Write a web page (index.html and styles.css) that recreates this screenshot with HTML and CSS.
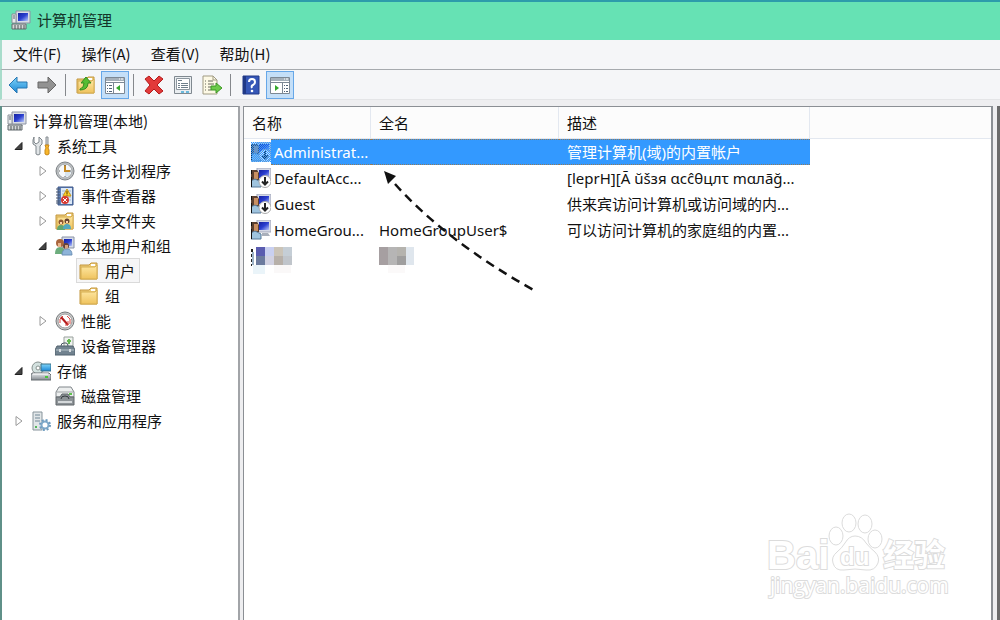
FILE: index.html
```html
<!DOCTYPE html>
<html lang="zh-CN">
<head>
  <meta charset="UTF-8">
  <meta name="viewport" content="width=device-width, initial-scale=1.0">
  <title>计算机管理</title>
  <link rel="stylesheet" href="styles.css">
</head>
<body>
  <!-- icon sprites -->
  <svg class="sprites" aria-hidden="true">
    <defs>
      <linearGradient id="screen" x1="0" y1="0" x2="1" y2="1">
        <stop offset="0" stop-color="#1420a0"/><stop offset=".5" stop-color="#2b3fd0"/><stop offset="1" stop-color="#b9c8fa"/>
      </linearGradient>
      <linearGradient id="gold" x1="0" y1="0" x2="0" y2="1">
        <stop offset="0" stop-color="#ffe9a6"/><stop offset="1" stop-color="#efc35e"/>
      </linearGradient>
      <linearGradient id="steel" x1="0" y1="0" x2="0" y2="1">
        <stop offset="0" stop-color="#e9ecee"/><stop offset="1" stop-color="#858b91"/>
      </linearGradient>
      <linearGradient id="sky" x1="0" y1="0" x2="0" y2="1">
        <stop offset="0" stop-color="#7fd4f8"/><stop offset="1" stop-color="#1b87d6"/>
      </linearGradient>
      <pattern id="dots" width="2" height="2" patternUnits="userSpaceOnUse">
        <path d="M0 0h1v1H0zM1 1h1v1H1z" fill="#3399ff"/>
      </pattern>
      <symbol id="computer" viewBox="0 0 20 20">
        <path d="M5 1h14v12H5z" fill="#d9dde6" stroke="#8b92a3"/>
        <path d="M7 3h10v8H7z" fill="url(#screen)"/>
        <path d="M1 4h4v9H1z" fill="#e8eaec" stroke="#8b9199"/>
        <path d="M2 6h2M2 8h2" stroke="#5e6771"/>
        <path d="M9 13h6l1 2H8z" fill="#b5bac4"/>
        <path d="M1 14h14v5H1z" fill="#d5d8d8" stroke="#60686c"/>
        <path d="M3 16h2M6 16h2M9 16h2M12 16h2M3 18h2M6 18h2M9 18h2M12 18h2" stroke="#4d5557"/>
      </symbol>
      <symbol id="tools" viewBox="0 0 20 20">
        <path d="M3 1v5l2 2 3-2V1l3 3v4L9 10v8q-2 2-4 0v-8L2 8V4z" fill="#e1e5e7" stroke="#7f868b"/>
        <path d="M15 1h2v8h-2z" fill="#d6dade" stroke="#878d92"/>
        <path d="M14 9h4l-1 3 1 2v4q-2 2-4 0v-4l1-2z" fill="#f8b62b" stroke="#c8891a"/>
      </symbol>
      <symbol id="clock" viewBox="0 0 20 20">
        <circle cx="10" cy="10" r="9" fill="#bec1c3" stroke="#7d8286"/>
        <circle cx="10" cy="10" r="7" fill="#f6f8fa" stroke="#a2a7aa"/>
        <path d="M10 10h6a6 6 0 0 1-6 6z" fill="#d7e4ee"/>
        <path d="M10 4v6h5" fill="none" stroke="#c48a27" stroke-width="2"/>
        <path d="M10 4v1M4 10h1M15 10h1M10 15v1" stroke="#666"/>
      </symbol>
      <symbol id="events" viewBox="0 0 20 20">
        <path d="M3 1h15v18H3z" fill="#5e80b6" stroke="#3c5789"/>
        <path d="M6 2h11v16H6z" fill="#dce8f6"/>
        <path d="M7 5h9M7 8h9M7 11h9M7 14h9" stroke="#9db5d4"/>
        <path d="M1 3h4M1 6h4M1 9h4M1 12h4M1 15h4M1 17h4" stroke="#4a5970"/>
        <path d="M12 3l4 7H8z" fill="#ffd22e" stroke="#c79618"/>
        <path d="M12 5v3M12 8.500v1" stroke="#553c00"/>
        <circle cx="10" cy="14" r="4" fill="#d73931"/>
        <path d="M8 12l4 4M12 12l-4 4" stroke="#fff"/>
      </symbol>
      <symbol id="folder" viewBox="0 0 20 20">
        <path d="M1 4h9l2-2h6v16H1z" fill="#eccb78" stroke="#c3963d"/>
        <path d="M12 3h4v2h-4z" fill="#fff"/>
        <path d="M2 6h14l2-2v14H2z" fill="url(#gold)" stroke="#d5ad51"/>
      </symbol>
      <symbol id="shared" viewBox="0 0 20 20">
        <use href="#folder"/>
        <circle cx="6" cy="11" r="2.500" fill="#8c5632"/>
        <path d="M2 19q0-5 4-5t4 5z" fill="#62a66d"/>
        <circle cx="12" cy="10" r="2.500" fill="#694431"/>
        <path d="M8 18q0-5 4-5t4 5z" fill="#53a8be"/>
        <path d="M5 12h2M11 11h2" stroke="#ffd6ae" stroke-width="2"/>
      </symbol>
      <symbol id="users" viewBox="0 0 20 20">
        <path d="M7 1h12v11H7z" fill="#d6dce8" stroke="#8992a5"/>
        <path d="M9 3h8v7H9z" fill="url(#screen)"/>
        <circle cx="5" cy="7" r="4" fill="#a9653d"/>
        <path d="M3 7h3v4H3z" fill="#e8b48c"/>
        <path d="M0 18q0-7 5-7t5 7z" fill="#6dad7d"/>
        <circle cx="11" cy="10" r="3" fill="#654239"/>
        <path d="M10 9h3v4h-3z" fill="#d8a27e"/>
        <path d="M7 19q0-6 5-6t5 6z" fill="#8eb4d9" stroke="#6d91b7"/>
      </symbol>
      <symbol id="gauge" viewBox="0 0 20 20">
        <circle cx="10" cy="10" r="9" fill="#ccc" stroke="#74787a"/>
        <circle cx="10" cy="10" r="7" fill="#fff" stroke="#999"/>
        <path d="M5 12V8l3-3M15 13V8l-3-3" fill="none" stroke="#d9453f"/>
        <path d="M6 6l7 8" stroke="#b51c1c" stroke-width="2"/>
        <path d="M13 10v4h-3" fill="none" stroke="#d9453f"/>
      </symbol>
      <symbol id="devices" viewBox="0 0 20 20">
        <path d="M9 1h9v10H9z" fill="#eef2ee" stroke="#99a09d"/>
        <path d="M14 3v5M12 5h4" stroke="#63b852" stroke-width="2"/>
        <path d="M6 10q0-3 3-3h2q2 0 2 3" fill="none" stroke="#485661"/>
        <path d="M2 10h16l2 4v5H0v-5z" fill="#71828f" stroke="#53626e"/>
        <path d="M1 14h18" stroke="#bac5cc"/>
        <path d="M4 13h2v3H4zM14 13h2v3h-2z" fill="#d7dce0"/>
      </symbol>
      <symbol id="storage" viewBox="0 0 20 20">
        <circle cx="7" cy="7" r="6" fill="#d3e1df" stroke="#87918f"/>
        <circle cx="7" cy="7" r="2" fill="#fff" stroke="#87918f"/>
        <path d="M10 3h10v7H10z" fill="url(#sky)" stroke="#387089"/>
        <path d="M1 12h17l2 2v5H0v-5z" fill="url(#steel)" stroke="#666d70"/>
        <path d="M2 13h15" stroke="#fff"/>
        <path d="M14 15h3v2h-3z" fill="#48c33a"/>
      </symbol>
      <symbol id="disk" viewBox="0 0 20 20">
        <path d="M4 1h12l3 5v5H1V6z" fill="#eceeee" stroke="#80868a"/>
        <path d="M2 6h16" stroke="#9da2a4"/>
        <path d="M14 7h3v2h-3z" fill="#5fc24e"/>
        <path d="M1 11h4l2-3h6l2 3h4v8H1z" fill="#8c9296" stroke="#60666a"/>
        <path d="M3 15h14v2H3z" fill="#d4d8da"/>
        <path d="M6 13q0-3 4-3t4 3" fill="none" stroke="#33393d"/>
      </symbol>
      <symbol id="services" viewBox="0 0 20 20">
        <path d="M2 1h9v18H2z" fill="#e1e6e8" stroke="#87949b"/>
        <path d="M4 4h5M4 7h5M4 10h5" stroke="#718796"/>
        <path d="M4 15h2v2H4z" fill="#54b75a"/>
        <circle cx="14" cy="14" r="3.500" fill="#fff" stroke="#7fa9c9" stroke-width="2"/>
        <circle cx="14" cy="14" r="5" fill="none" stroke="#6e9cbf" stroke-width="2" stroke-dasharray="2 1.930"/>
      </symbol>
      <symbol id="user" viewBox="0 0 20 20">
        <path d="M6 0h14v12H6z" fill="#d4d8e6" stroke="#a4a9bb"/>
        <path d="M8 2h10v8H8z" fill="url(#screen)"/>
        <path d="M11 13h6l2 3h-8z" fill="#aab0bb"/>
        <path d="M0 2h6l2 3v7H0z" fill="#5b4030"/>
        <path d="M3 4h4v7H3z" fill="#c98f62"/>
        <path d="M0 19v-6l4-2 6 3v5z" fill="#9fc4df" stroke="#587b99"/>
        <path d="M0 2h1v4H0zM0 9h1v10H0z" fill="#111"/>
      </symbol>
      <symbol id="user-off" viewBox="0 0 20 20">
        <use href="#user"/>
        <circle cx="14" cy="13.500" r="6" fill="#fff" stroke="#aaa"/>
        <path d="M14 9v7M11 13.500l3 3 3-3" fill="none" stroke="#222" stroke-width="2"/>
      </symbol>
      <symbol id="user-picked" viewBox="0 0 20 20">
        <use href="#user-off"/>
        <path d="M0 0h20v20H0z" fill="#3399ff" opacity=".3"/>
        <path d="M0 0h20v20H0z" fill="url(#dots)"/>
      </symbol>
      <symbol id="closed" viewBox="0 0 10 10"><path d="M2 0.500v9l6-4.500z" fill="#fff" stroke="#999"/></symbol>
      <symbol id="open" viewBox="0 0 10 10"><path d="M8 1.500v7H1z" fill="#444" stroke="#222"/></symbol>
      <symbol id="back" viewBox="0 0 20 20"><path d="M1 10l8-8v5h10v6H9v5z" fill="url(#sky)" stroke="#2776b1"/></symbol>
      <symbol id="forward" viewBox="0 0 20 20"><path d="M19 10l-8-8v5H1v6h10v5z" fill="#929292" stroke="#676767"/></symbol>
      <symbol id="up" viewBox="0 0 20 20">
        <use href="#folder"/>
        <path d="M4 14q4-1 4-6H5l5-6 5 6h-3q0 7-8 7z" fill="#56bd33" stroke="#358b1d"/>
      </symbol>
      <symbol id="pane" viewBox="0 0 20 20">
        <path d="M0.500 2.500h19v16H.5z" fill="#fff" stroke="#7c8894"/>
        <path d="M1 3h18v3H1z" fill="#a6b1bb"/>
        <path d="M14 4h1M16 4h2" stroke="#fff"/>
        <path d="M1 7.500h18M8.500 8v10" stroke="#7c8894"/>
        <path d="M2 10.500h1M4 10.500h3M2 13.500h1M4 13.500h3M2 16.500h1M4 16.500h3" stroke="#526579"/>
        <path d="M15 10v6l-4-3z" fill="#35a82c"/>
      </symbol>
      <symbol id="pane-right" viewBox="0 0 20 20">
        <path d="M0.500 2.500h19v16H.5z" fill="#fff" stroke="#7c8894"/>
        <path d="M1 3h18v3H1z" fill="#a6b1bb"/>
        <path d="M14 4h1M16 4h2" stroke="#fff"/>
        <path d="M1 7.500h18M12.500 8v10" stroke="#7c8894"/>
        <path d="M14 10.500h1M16 10.500h2M14 13.500h1M16 13.500h2M14 16.500h1M16 16.500h2" stroke="#526579"/>
        <path d="M5 10v6l4-3z" fill="#35a82c"/>
      </symbol>
      <symbol id="delete" viewBox="0 0 20 20">
        <path d="M1 4l4-3 5 5 5-5 4 3-6 6 6 6-4 3-5-5-5 5-4-3 5-6z" fill="#e23a3a" stroke="#b41b1b"/>
      </symbol>
      <symbol id="props" viewBox="0 0 20 20">
        <path d="M1.500 1.500h17v17h-17z" fill="#e9edf0" stroke="#808990"/>
        <path d="M3.500 3.500h13v11h-13z" fill="#fff" stroke="#8d979f"/>
        <path d="M5 5.500h4M5 8.500h2M8 8.500h7M5 10.500h2M8 10.500h7M5 12.500h2M8 12.500h7" stroke="#6f808c"/>
        <path d="M8 17h3M13 17h3" stroke="#6bb9dc" stroke-width="2"/>
      </symbol>
      <symbol id="export" viewBox="0 0 20 20">
        <path d="M1 1h10l4 4v14H1z" fill="#fdf9e5" stroke="#a09b83"/>
        <path d="M11 1v4h4" fill="none" stroke="#a09b83"/>
        <path d="M3 6h1M6 6h5M3 9h1M6 9h6M3 12h1M6 12h3M3 15h1M6 15h3" stroke="#68685d"/>
        <path d="M9 11h5V8l6 5-6 5v-3H9z" fill="#6cca49" stroke="#3d9826"/>
      </symbol>
      <symbol id="help" viewBox="0 0 20 20">
        <path d="M2 1h16v18H2z" fill="#3557b7" stroke="#233b88"/>
        <path d="M2 1h3v18H2z" fill="#203987"/>
        <path d="M8 7q0-3 3-3t3 3q0 2-2 3t-1 3" fill="none" stroke="#fff" stroke-width="2"/>
        <circle cx="11" cy="16" r="1.300" fill="#fff"/>
      </symbol>
    </defs>
  </svg>

  <div class="window">
    <header class="titlebar">
      <svg class="icon"><use href="#computer"/></svg>
      <h1>计算机管理</h1>
    </header>

    <nav class="menubar">
      <button>文件(F)</button>
      <button>操作(A)</button>
      <button>查看(V)</button>
      <button>帮助(H)</button>
    </nav>

    <div class="toolbar">
      <button aria-label="后退"><svg class="icon"><use href="#back"/></svg></button>
      <button aria-label="前进"><svg class="icon"><use href="#forward"/></svg></button>
      <span class="sep"></span>
      <button aria-label="向上"><svg class="icon"><use href="#up"/></svg></button>
      <button class="on" aria-label="控制台树"><svg class="icon"><use href="#pane"/></svg></button>
      <span class="sep"></span>
      <button aria-label="删除"><svg class="icon"><use href="#delete"/></svg></button>
      <button aria-label="属性"><svg class="icon"><use href="#props"/></svg></button>
      <button aria-label="导出列表"><svg class="icon"><use href="#export"/></svg></button>
      <span class="sep"></span>
      <button aria-label="帮助"><svg class="icon"><use href="#help"/></svg></button>
      <button class="on" aria-label="操作窗格"><svg class="icon"><use href="#pane-right"/></svg></button>
    </div>

    <main class="workspace">
      <nav class="tree">
        <ul>
          <li>
            <div class="node"><a href="#"><svg class="icon"><use href="#computer"/></svg>计算机管理(本地)</a></div>
            <ul class="top">
              <li>
                <div class="node"><button class="toggle" aria-label="折叠"><svg><use href="#open"/></svg></button><a href="#"><svg class="icon"><use href="#tools"/></svg>系统工具</a></div>
                <ul>
                  <li><div class="node"><button class="toggle" aria-label="展开"><svg><use href="#closed"/></svg></button><a href="#"><svg class="icon"><use href="#clock"/></svg>任务计划程序</a></div></li>
                  <li><div class="node"><button class="toggle" aria-label="展开"><svg><use href="#closed"/></svg></button><a href="#"><svg class="icon"><use href="#events"/></svg>事件查看器</a></div></li>
                  <li><div class="node"><button class="toggle" aria-label="展开"><svg><use href="#closed"/></svg></button><a href="#"><svg class="icon"><use href="#shared"/></svg>共享文件夹</a></div></li>
                  <li>
                    <div class="node"><button class="toggle" aria-label="折叠"><svg><use href="#open"/></svg></button><a href="#"><svg class="icon"><use href="#users"/></svg>本地用户和组</a></div>
                    <ul>
                      <li><div class="node leaf"><a href="#" class="current"><svg class="icon"><use href="#folder"/></svg>用户</a></div></li>
                      <li><div class="node leaf"><a href="#"><svg class="icon"><use href="#folder"/></svg>组</a></div></li>
                    </ul>
                  </li>
                  <li><div class="node"><button class="toggle" aria-label="展开"><svg><use href="#closed"/></svg></button><a href="#"><svg class="icon"><use href="#gauge"/></svg>性能</a></div></li>
                  <li><div class="node leaf"><a href="#"><svg class="icon"><use href="#devices"/></svg>设备管理器</a></div></li>
                </ul>
              </li>
              <li>
                <div class="node"><button class="toggle" aria-label="折叠"><svg><use href="#open"/></svg></button><a href="#"><svg class="icon"><use href="#storage"/></svg>存储</a></div>
                <ul>
                  <li><div class="node leaf"><a href="#"><svg class="icon"><use href="#disk"/></svg>磁盘管理</a></div></li>
                </ul>
              </li>
              <li><div class="node"><button class="toggle" aria-label="展开"><svg><use href="#closed"/></svg></button><a href="#"><svg class="icon"><use href="#services"/></svg>服务和应用程序</a></div></li>
            </ul>
          </li>
        </ul>
      </nav>

      <section class="list">
        <table>
          <colgroup>
            <col class="col-name"><col class="col-full"><col class="col-desc"><col>
          </colgroup>
          <thead>
            <tr><th>名称</th><th>全名</th><th>描述</th><th></th></tr>
          </thead>
          <tbody>
            <tr class="selected">
              <td class="name"><div><svg class="icon"><use href="#user-picked"/></svg><span>Administrat...</span></div></td>
              <td></td><td>管理计算机(域)的内置帐户</td><td></td>
            </tr>
            <tr>
              <td class="name"><div><svg class="icon"><use href="#user-off"/></svg><span>DefaultAcc...</span></div></td>
              <td></td><td>[leprH][Ā ŭšзя αcĉθцлτ mαлãğ...</td><td></td>
            </tr>
            <tr>
              <td class="name"><div><svg class="icon"><use href="#user-off"/></svg><span>Guest</span></div></td>
              <td></td><td>供来宾访问计算机或访问域的内...</td><td></td>
            </tr>
            <tr>
              <td class="name"><div><svg class="icon"><use href="#user"/></svg><span>HomeGrou...</span></div></td>
              <td>HomeGroupUser$</td><td>可以访问计算机的家庭组的内置...</td><td></td>
            </tr>
            <tr>
              <td class="name">
                <svg class="mosaic" viewBox="0 0 41 27">
                  <path d="M0 2h2v3H0zM0 7h1v3H0zM0 12h2v3H0zM0 17h1v2H0z" fill="#222"/>
                  <path d="M1 5h2v13H1z" fill="#9db4c8"/>
                  <path d="M2 18h12v9H2z" fill="#eaf4f9"/>
                  <path d="M23 18h17v8H23z" fill="#faf8f8"/>
                  <path d="M5 0h9v9H5z" fill="#5a5cb0"/><path d="M5 9h9v9H5z" fill="#6c7b9e"/>
                  <path d="M14 0h9v9h-9z" fill="#c9d0f1"/><path d="M14 9h9v9h-9z" fill="#d2d2e2"/>
                  <path d="M23 0h9v9h-9z" fill="#cbc4b8"/><path d="M23 9h9v9h-9z" fill="#b7b0a9"/>
                  <path d="M32 0h9v9h-9z" fill="#c5ced6"/><path d="M32 9h9v9h-9z" fill="#c0c5cb"/>
                </svg>
              </td>
              <td>
                <svg class="mosaic" viewBox="0 0 41 27">
                  <path d="M0 0h9v18H0z" fill="#a69fa1"/><path d="M9 0h9v18H9z" fill="#b6b5b5"/>
                  <path d="M18 0h9v9h-9z" fill="#b5b3ae"/><path d="M18 9h9v9h-9z" fill="#9f9e9e"/>
                  <path d="M27 0h8v18h-8z" fill="#dfe6ed"/><path d="M9 18h17v8H9z" fill="#fbf9f9"/>
                </svg>
              </td>
              <td></td><td></td>
            </tr>
          </tbody>
        </table>

        <svg class="arrow" viewBox="0 0 160 130" aria-hidden="true">
          <path d="M14 16Q66 74 156 124" fill="none" stroke="#111" stroke-width="2.500" stroke-dasharray="9 6"/>
          <path d="M3 3l12 5-8 8z" fill="#111"/>
        </svg>

        <svg class="watermark" viewBox="0 0 200 100">
          <g fill="#fff" stroke="#dcdcdc">
            <ellipse cx="80" cy="31" rx="7" ry="9"/>
            <ellipse cx="93" cy="18" rx="7" ry="9"/>
            <ellipse cx="109" cy="19" rx="7" ry="9"/>
            <ellipse cx="119" cy="34" rx="7" ry="9"/>
            <path d="M99 31q7 0 11 7 4 5 9 9 5 5 3 11-3 8-12 7-11-2-22 0-9 1-11-7-2-6 4-11 5-4 8-9 4-7 10-7z"/>
            <g class="outline">
              <text x="11" y="64" class="brand">Bai</text>
              <text x="84" y="60" class="du">du</text>
              <text x="127" y="61" class="cn">经验</text>
              <text x="14" y="88" class="site">jingyan.baidu.com</text>
            </g>
          </g>
        </svg>
      </section>
    </main>
  </div>
</body>
</html>
```

FILE: styles.css
```css
* {
  box-sizing: border-box;
}
body {
  margin: 0;
  font-family: "Noto Sans CJK SC", sans-serif;
  font-size: 15px;
  color: #111;
}
button {
  font: inherit;
  color: inherit;
  background: none;
  border: 0;
  padding: 0;
}
a {
  color: inherit;
  text-decoration: none;
}
ul {
  list-style: none;
  margin: 0;
  padding: 0;
}
.sprites {
  position: absolute;
  width: 0;
  height: 0;
}
.icon {
  width: 20px;
  height: 20px;
  flex: none;
}
.window {
  display: flex;
  flex-direction: column;
  min-height: 100vh;
  background: #eeeef0;
}

/* title, menu and toolbar */
.titlebar {
  display: flex;
  align-items: center;
  gap: 6px;
  height: 40px;
  padding: 0 0 3px 11px;
  border-top: 2px solid #2d9cab;
  background: #66e2b4;
}
.titlebar h1 {
  margin: 0;
  font-size: 15px;
  font-weight: 400;
  color: #14352a;
}
.menubar {
  display: flex;
  gap: 20px;
  height: 30px;
  padding: 0 0 2px 11px;
  border-left: 2px solid #a8dccb;
  border-bottom: 1px solid #a6aaae;
  background: #f5f6f8;
}
.toolbar {
  display: flex;
  align-items: center;
  gap: 1px;
  height: 30px;
  padding: 1px 0 0 2px;
  border-left: 2px solid #a8dccb;
  border-bottom: 1px solid #e4e5e7;
  background: #f5f6f8;
}
.toolbar button {
  display: flex;
  align-items: center;
  justify-content: center;
  width: 28px;
  height: 28px;
}
.toolbar .on {
  border: 1px solid #66a7e8;
  background: #c4dff8;
}
.sep {
  width: 1px;
  height: 22px;
  margin: 0 5px 0 3px;
  background: #85888c;
}

/* panels */
.workspace {
  flex: 1;
  display: flex;
  gap: 3px;
  margin-top: 6px;
  border-left: 2px solid #5f9088;
  border-right: 3px solid #6b6b6b;
  padding-right: 4px;
}
.tree {
  flex: none;
  width: 238px;
  padding: 1px 0 0 3px;
  background: #fff;
  border-top: 1px solid #8b8f94;
  border-right: 2px solid #a2a4a8;
}
.tree ul ul {
  padding-left: 24px;
}
.tree ul.top {
  padding-left: 9px;
}
.node {
  display: flex;
  align-items: center;
  height: 25px;
}
.leaf {
  padding-left: 15px;
}
.toggle {
  display: flex;
  width: 15px;
}
.toggle svg {
  width: 10px;
  height: 10px;
}
.node a {
  display: flex;
  align-items: center;
  gap: 6px;
  height: 25px;
  padding: 0 4px 0 2px;
  border: 1px solid transparent;
  border-left: 0;
  white-space: nowrap;
}
.node .current {
  background: #f6f6f7;
  border-color: #dadada;
  box-shadow: -1px 0 #dadada;
}
.list {
  position: relative;
  flex: 1;
  min-width: 0;
  background: #fff;
  border: 1px solid #8b8f94;
  border-bottom: 0;
  border-right-width: 2px;
}
table {
  width: 100%;
  table-layout: fixed;
  border-collapse: separate;
  border-spacing: 0;
}
.col-name {
  width: 127px;
}
.col-full {
  width: 188px;
}
.col-desc {
  width: 251px;
}
th {
  height: 32px;
  padding: 0 8px;
  text-align: left;
  font-weight: 400;
  background: #fcfcfc;
  border-bottom: 1px solid #e3e8f0;
  border-right: 1px solid #e3e8f0;
}
th:last-child {
  border-right: 0;
}
td {
  height: 26px;
  padding: 0 0 0 8px;
  line-height: 24px;
  white-space: nowrap;
  font-family: "Noto Sans", "Noto Sans CJK SC", sans-serif;
}
.name {
  padding-left: 7px;
}
.name div {
  display: flex;
  align-items: center;
}
.name span {
  flex: 1;
  padding-left: 3px;
  border: 1px solid transparent;
  border-width: 1px 0;
}
.selected td:not(.name):not(:last-child),
.selected .name span {
  color: #fff;
  background: #3399ff;
  border: 1px dotted #8f7a5c;
  border-width: 1px 0;
}
.mosaic {
  display: block;
  width: 41px;
  height: 27px;
  margin-top: 4px;
}

/* overlays */
.arrow {
  position: absolute;
  left: 137px;
  top: 61px;
  width: 160px;
  height: 130px;
}
.watermark {
  position: absolute;
  right: 35px;
  bottom: 15px;
  width: 200px;
  height: 100px;
}
.outline {
  paint-order: stroke;
  stroke-width: 2px;
}
.brand {
  font: bold 40px "Liberation Sans", sans-serif;
}
.du {
  font: bold 24px "Liberation Sans", sans-serif;
}
.cn {
  font: bold 31px "Noto Sans CJK SC", sans-serif;
}
.site {
  font: 21px "Open Sans", sans-serif;
}
```
